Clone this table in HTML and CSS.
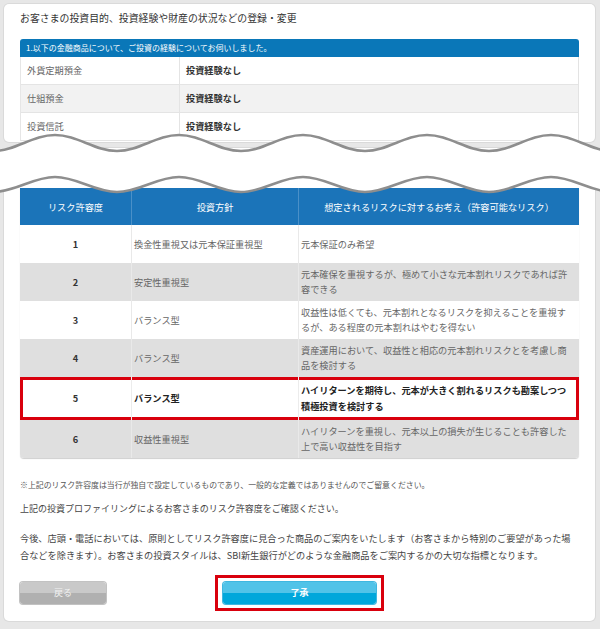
FILE: index.html
```html
<!DOCTYPE html>
<html lang="ja">
<head>
<meta charset="utf-8">
<title>リスク許容度</title>
<link rel="stylesheet" href="styles.css">
</head>
<body>
<div class="page">
  <section class="card card-top">
    <h1 class="title">お客さまの投資目的、投資経験や財産の状況などの登録・変更</h1>
    <div class="bar">1.以下の金融商品について、ご投資の経験についてお伺いしました。</div>
    <div class="t1">
      <div class="t1-row"><div class="t1-k">外貨定期預金</div><div class="t1-v">投資経験なし</div></div>
      <div class="t1-row alt"><div class="t1-k">仕組預金</div><div class="t1-v">投資経験なし</div></div>
      <div class="t1-row"><div class="t1-k">投資信託</div><div class="t1-v">投資経験なし</div></div>
    </div>
  </section>

  <svg class="wave" viewBox="0 0 600 70" width="600" height="70" aria-hidden="true">
    <path fill="#fff" d="M -69 7 C -46.4 7 -29.6 23 -7 23 S 32.4 7 55 7 S 94.4 23 117 23 S 156.4 7 179 7 S 218.4 23 241 23 S 280.4 7 303 7 S 342.4 23 365 23 S 404.4 7 427 7 S 466.4 23 489 23 S 528.4 7 551 7 S 590.4 23 613 23 S 652.4 7 675 7 L 675 49 C 652.4 49 635.6 64 613 64 S 573.6 49 551 49 S 511.6 64 489 64 S 449.6 49 427 49 S 387.6 64 365 64 S 325.6 49 303 49 S 263.6 64 241 64 S 201.6 49 179 49 S 139.6 64 117 64 S 77.6 49 55 49 S 15.6 64 -7 64 S -46.4 49 -69 49 Z"/>
    <path fill="none" stroke="#8e8e8e" stroke-width="2.6" d="M -69 7 C -46.4 7 -29.6 23 -7 23 S 32.4 7 55 7 S 94.4 23 117 23 S 156.4 7 179 7 S 218.4 23 241 23 S 280.4 7 303 7 S 342.4 23 365 23 S 404.4 7 427 7 S 466.4 23 489 23 S 528.4 7 551 7 S 590.4 23 613 23 S 652.4 7 675 7"/>
    <path fill="none" stroke="#8e8e8e" stroke-width="2.6" d="M -69 49 C -46.4 49 -29.6 64 -7 64 S 32.4 49 55 49 S 94.4 64 117 64 S 156.4 49 179 49 S 218.4 64 241 64 S 280.4 49 303 49 S 342.4 64 365 64 S 404.4 49 427 49 S 466.4 64 489 64 S 528.4 49 551 49 S 590.4 64 613 64 S 652.4 49 675 49"/>
  </svg>

  <section class="card card-main">
    <div class="t2">
      <div class="t2-head">
        <div class="h">リスク許容度</div>
        <div class="h">投資方針</div>
        <div class="h">想定されるリスクに対するお考え（許容可能なリスク）</div>
      </div>
      <div class="t2-row">
        <div class="num">1</div><div class="c">換金性重視又は元本保証重視型</div><div class="c">元本保証のみ希望</div>
      </div>
      <div class="t2-row alt">
        <div class="num">2</div><div class="c">安定性重視型</div><div class="c">元本確保を重視するが、極めて小さな元本割れリスクであれば許容できる</div>
      </div>
      <div class="t2-row">
        <div class="num">3</div><div class="c">バランス型</div><div class="c">収益性は低くても、元本割れとなるリスクを抑えることを重視するが、ある程度の元本割れはやむを得ない</div>
      </div>
      <div class="t2-row alt">
        <div class="num">4</div><div class="c">バランス型</div><div class="c">資産運用において、収益性と相応の元本割れリスクとを考慮し商品を検討する</div>
      </div>
      <div class="t2-row selected">
        <div class="num">5</div><div class="c">バランス型</div><div class="c">ハイリターンを期待し、元本が大きく割れるリスクも勘案しつつ積極投資を検討する</div>
      </div>
      <div class="t2-row alt last">
        <div class="num">6</div><div class="c">収益性重視型</div><div class="c">ハイリターンを重視し、元本以上の損失が生じることも許容した上で高い収益性を目指す</div>
      </div>
    </div>

    <p class="note">※上記のリスク許容度は当行が独自で設定しているものであり、一般的な定義ではありませんのでご留意ください。</p>
    <p class="confirm">上記の投資プロファイリングによるお客さまのリスク許容度をご確認ください。</p>
    <p class="para">今後、店頭・電話においては、原則としてリスク許容度に見合った商品のご案内をいたします（お客さまから特別のご要望があった場合などを除きます）。お客さまの投資スタイルは、SBI新生銀行がどのような金融商品をご案内するかの大切な指標となります。</p>

    <div class="actions">
      <button class="btn back" type="button">戻る</button>
      <div class="ok-frame"><button class="btn ok" type="button">了承</button></div>
    </div>
  </section>
</div>
</body>
</html>
```

FILE: styles.css
```css
* {
  box-sizing: border-box;
  margin: 0;
  padding: 0;
}

html, body {
  width: 600px;
  height: 629px;
  overflow: hidden;
}

body {
  background: #e7e7e7;
  font-family: "Noto Sans CJK JP", "Noto Sans", sans-serif;
  color: #444;
}

.page {
  position: relative;
  padding: 4px 5px 0 4px;
}

.card {
  background: #fff;
  border-radius: 5px;
  box-shadow: 0 0 0 1px #dadada;
}

.card-top {
  height: 138px;
  padding: 7px 16px 0;
  overflow: hidden;
}

.title {
  font-size: 9.9px;
  font-weight: normal;
  line-height: 14px;
  color: #333;
}

.bar {
  margin-top: 14px;
  height: 18px;
  background: #0a77b8;
  color: #fff;
  font-size: 8px;
  line-height: 18px;
  padding-left: 6px;
  border-radius: 3px 3px 0 0;
}

.t1 {
  border-left: 1px solid #e6e6e6;
  border-right: 1px solid #e3e3e3;
}

.t1-row {
  display: grid;
  grid-template-columns: 158px 1fr;
  height: 28px;
  border-bottom: 1px solid #e4e4e4;
  font-size: 9.2px;
  line-height: 27px;
}

.t1-row.alt {
  background: #f2f2f2;
}

.t1-k {
  padding-left: 6px;
  color: #666;
}

.t1-v {
  padding-left: 6px;
  border-left: 1px solid #e4e4e4;
  color: #333;
  font-weight: bold;
}

.wave {
  position: absolute;
  left: 0;
  top: 128px;
  display: block;
}

.card-main {
  margin-top: 6px;
  padding: 40px 16px 10px;
}

.t2 {
  border-radius: 0 0 4px 4px;
  box-shadow: 0 1px 1px #cfcfcf;
}

.t2-head,
.t2-row {
  display: grid;
  grid-template-columns: 111px 167px 1fr;
}

.t2-head {
  height: 37px;
  background: #1b74b9;
  color: #fff;
  font-size: 9.2px;
}

.t2-head .h {
  display: flex;
  align-items: center;
  justify-content: center;
}

.t2-head .h + .h {
  border-left: 1px solid #4a90c8;
}

.t2-row {
  min-height: 38px;
  background: #fff;
  font-size: 9.2px;
  line-height: 15px;
  color: #666;
}

.t2-row.alt {
  background: #dfdfdf;
}

.t2-row.last {
  border-radius: 0 0 4px 4px;
}

.t2-row .num {
  display: flex;
  align-items: center;
  justify-content: center;
  font-weight: bold;
  color: #333;
}

.t2-row .c {
  display: flex;
  align-items: center;
  padding: 4px 8px 4px 2px;
  border-left: 1px solid #e9e9e9;
}

.t2-row.selected {
  min-height: 43px;
  line-height: 15.5px;
  color: #222;
  font-weight: bold;
  box-shadow: inset 0 0 0 3px #d9000d;
}

.t2-row.selected .c {
  border-left-color: #ececec;
}

.t2-row.selected .c:last-child {
  padding-right: 9px;
}

.note {
  margin-top: 21px;
  font-size: 7.9px;
  line-height: 12px;
  color: #555;
}

.confirm {
  margin-top: 11px;
  font-size: 9px;
  line-height: 14px;
  color: #444;
}

.para {
  margin-top: 14px;
  font-size: 9.2px;
  line-height: 17px;
  color: #444;
}

.actions {
  margin-top: 11px;
  display: grid;
  grid-template-columns: 1fr auto 1fr;
  align-items: center;
  height: 36px;
}

.btn {
  border: none;
  font-family: inherit;
  height: 22px;
  border-radius: 3px;
  font-size: 9px;
  line-height: 22px;
  cursor: pointer;
}

.back {
  justify-self: start;
  width: 86px;
  background: linear-gradient(#c9c9c9 50%, #b0b0b0 50%);
  color: #f2f2f2;
  box-shadow: 0 0 0 1px #c2c2c2;
}

.ok-frame {
  border: 3px solid #d9000d;
  padding: 4px 5px;
  height: 36px;
}

.ok {
  display: block;
  width: 153px;
  background: linear-gradient(#51c3e8 50%, #00a7db 50%);
  color: #fff;
  font-weight: bold;
  box-shadow: 0 0 0 1px #3fb7e0;
}
```
